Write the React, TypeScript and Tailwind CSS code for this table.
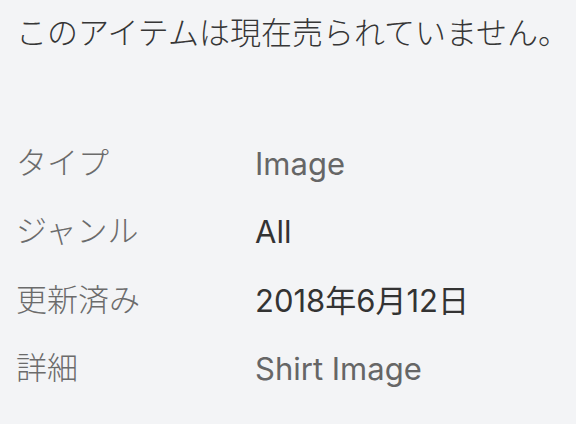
export default function App() {
  const rows: { label: string; value: string; dark: boolean }[] = [
    { label: "タイプ", value: "Image", dark: false },
    { label: "ジャンル", value: "All", dark: true },
    { label: "更新済み", value: "2018年6月12日", dark: true },
    { label: "詳細", value: "Shirt Image", dark: false },
  ];
  return (
    <div
      className="w-[576px] h-[424px] bg-[#f3f4f6] overflow-hidden px-4 font-light"
      style={{ fontFamily: 'Roboto, "Noto Sans CJK JP", sans-serif' }}
    >
      <div className="pt-[14px] text-[31px] leading-[40px] text-[#363636] whitespace-nowrap">
        このアイテムは現在売られていません。
      </div>
      <div className="mt-[90px] flex flex-col gap-[28.5px]">
        {rows.map((r) => (
          <div key={r.label} className="flex items-center h-[40px]">
            <div className="w-[239px] text-[31px] text-[#6b6b6b]">{r.label}</div>
            <div
              className={`text-[31px] font-normal ${r.dark ? "text-[#333333]" : "text-[#666666]"}`}
              style={{ fontFamily: 'Inter, "Noto Sans CJK JP", sans-serif' }}
            >
              {r.value}
            </div>
          </div>
        ))}
      </div>
    </div>
  );
}
